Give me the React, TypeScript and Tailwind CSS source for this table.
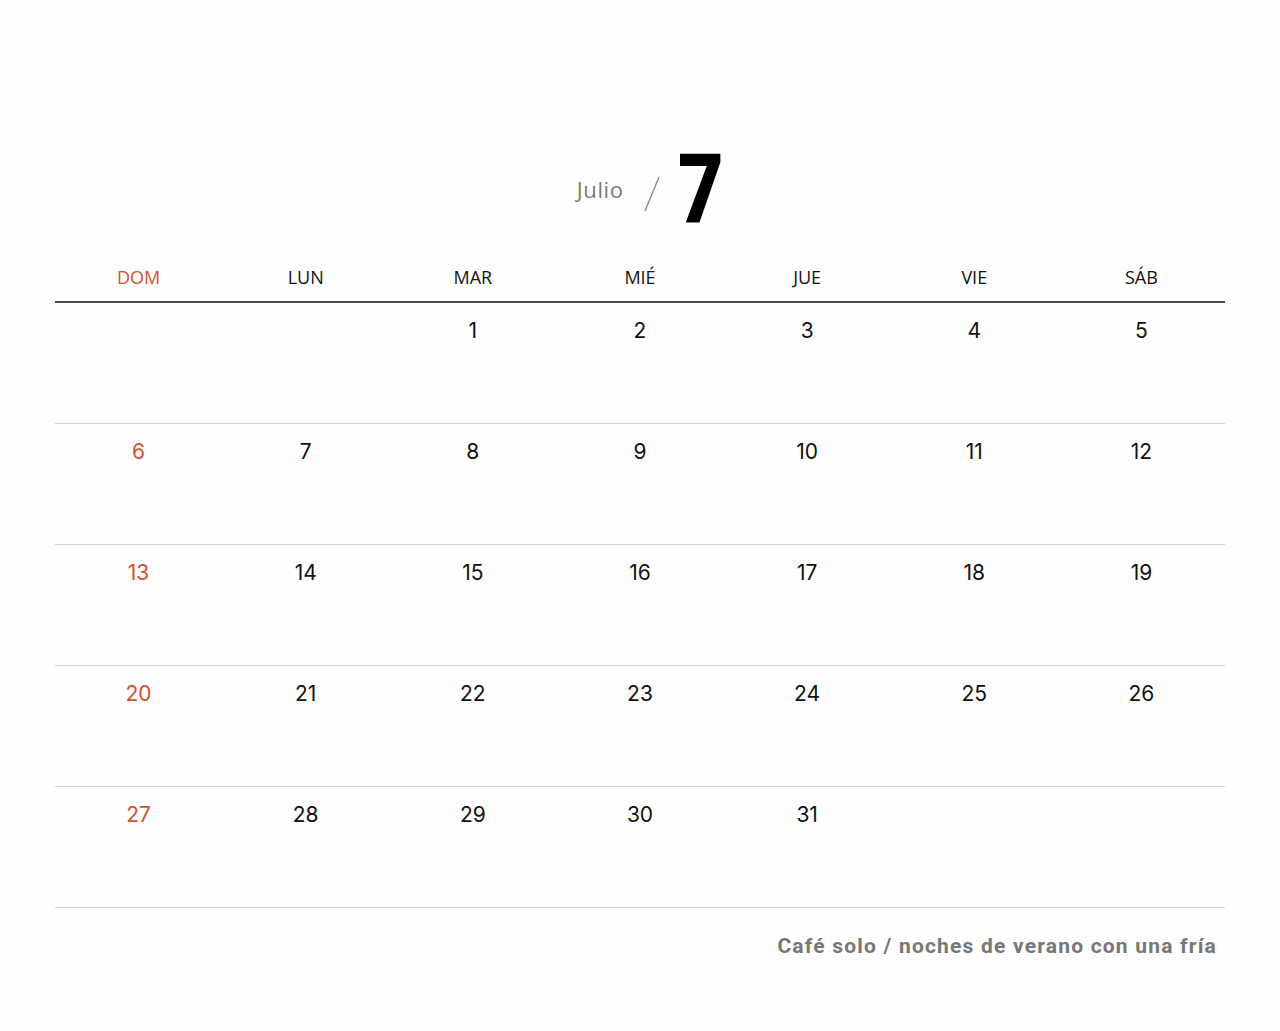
import React from "react";

const days = ["DOM", "LUN", "MAR", "MIÉ", "JUE", "VIE", "SÁB"];

// julio: empieza en martes (índice 2)
const weeks: (number | null)[][] = [
  [null, null, 1, 2, 3, 4, 5],
  [6, 7, 8, 9, 10, 11, 12],
  [13, 14, 15, 16, 17, 18, 19],
  [20, 21, 22, 23, 24, 25, 26],
  [27, 28, 29, 30, 31, null, null],
];

const App = () => {
  return (
    <main className="min-h-screen bg-[#fefefe] pt-[141px]">
      <header className="flex items-center justify-center pl-[30px]">
        <span className="font-['Open_Sans',sans-serif] text-[22px] font-normal text-[#7a7a7a] tracking-[0.6px]">
          Julio
        </span>
        <svg width="18" height="36" viewBox="0 0 18 36" className="ml-[19px] mt-[10px]">
          <line x1="16" y1="1" x2="2" y2="35" stroke="#8a8a8a" strokeWidth="1.4" />
        </svg>
        <span className="ml-[17px] origin-left scale-x-[0.82] font-['Roboto',sans-serif] text-[96px] font-black leading-none text-black">
          7
        </span>
      </header>

      <section className="mx-[55px] mt-[26px]">
        <div className="grid grid-cols-7 border-b-2 border-[#4a4a4a] pb-[10px]">
          {days.map((d, i) => (
            <div
              key={d}
              className={
                "text-center font-['Open_Sans',sans-serif] text-[18px] leading-[28px] " +
                (i === 0 ? "text-[#d1512c]" : "text-[#111]")
              }
            >
              {d}
            </div>
          ))}
        </div>

        {weeks.map((week, w) => (
          <div key={w} className="grid h-[121px] grid-cols-7 border-b border-[#d2d2d2]">
            {week.map((n, i) => (
              <div
                key={i}
                className={
                  "pt-[14px] text-center font-['Inter',sans-serif] text-[21px] leading-[28px] " +
                  (i === 0 ? "text-[#d1512c]" : "text-[#111]")
                }
              >
                {n ?? ""}
              </div>
            ))}
          </div>
        ))}

        <p className="mt-[24px] pr-[8px] text-right font-['Roboto',sans-serif] text-[21px] font-bold leading-[28px] tracking-[1.2px] text-[#777]">
          Café solo / noches de verano con una fría
        </p>
      </section>
    </main>
  );
};

export default App;
